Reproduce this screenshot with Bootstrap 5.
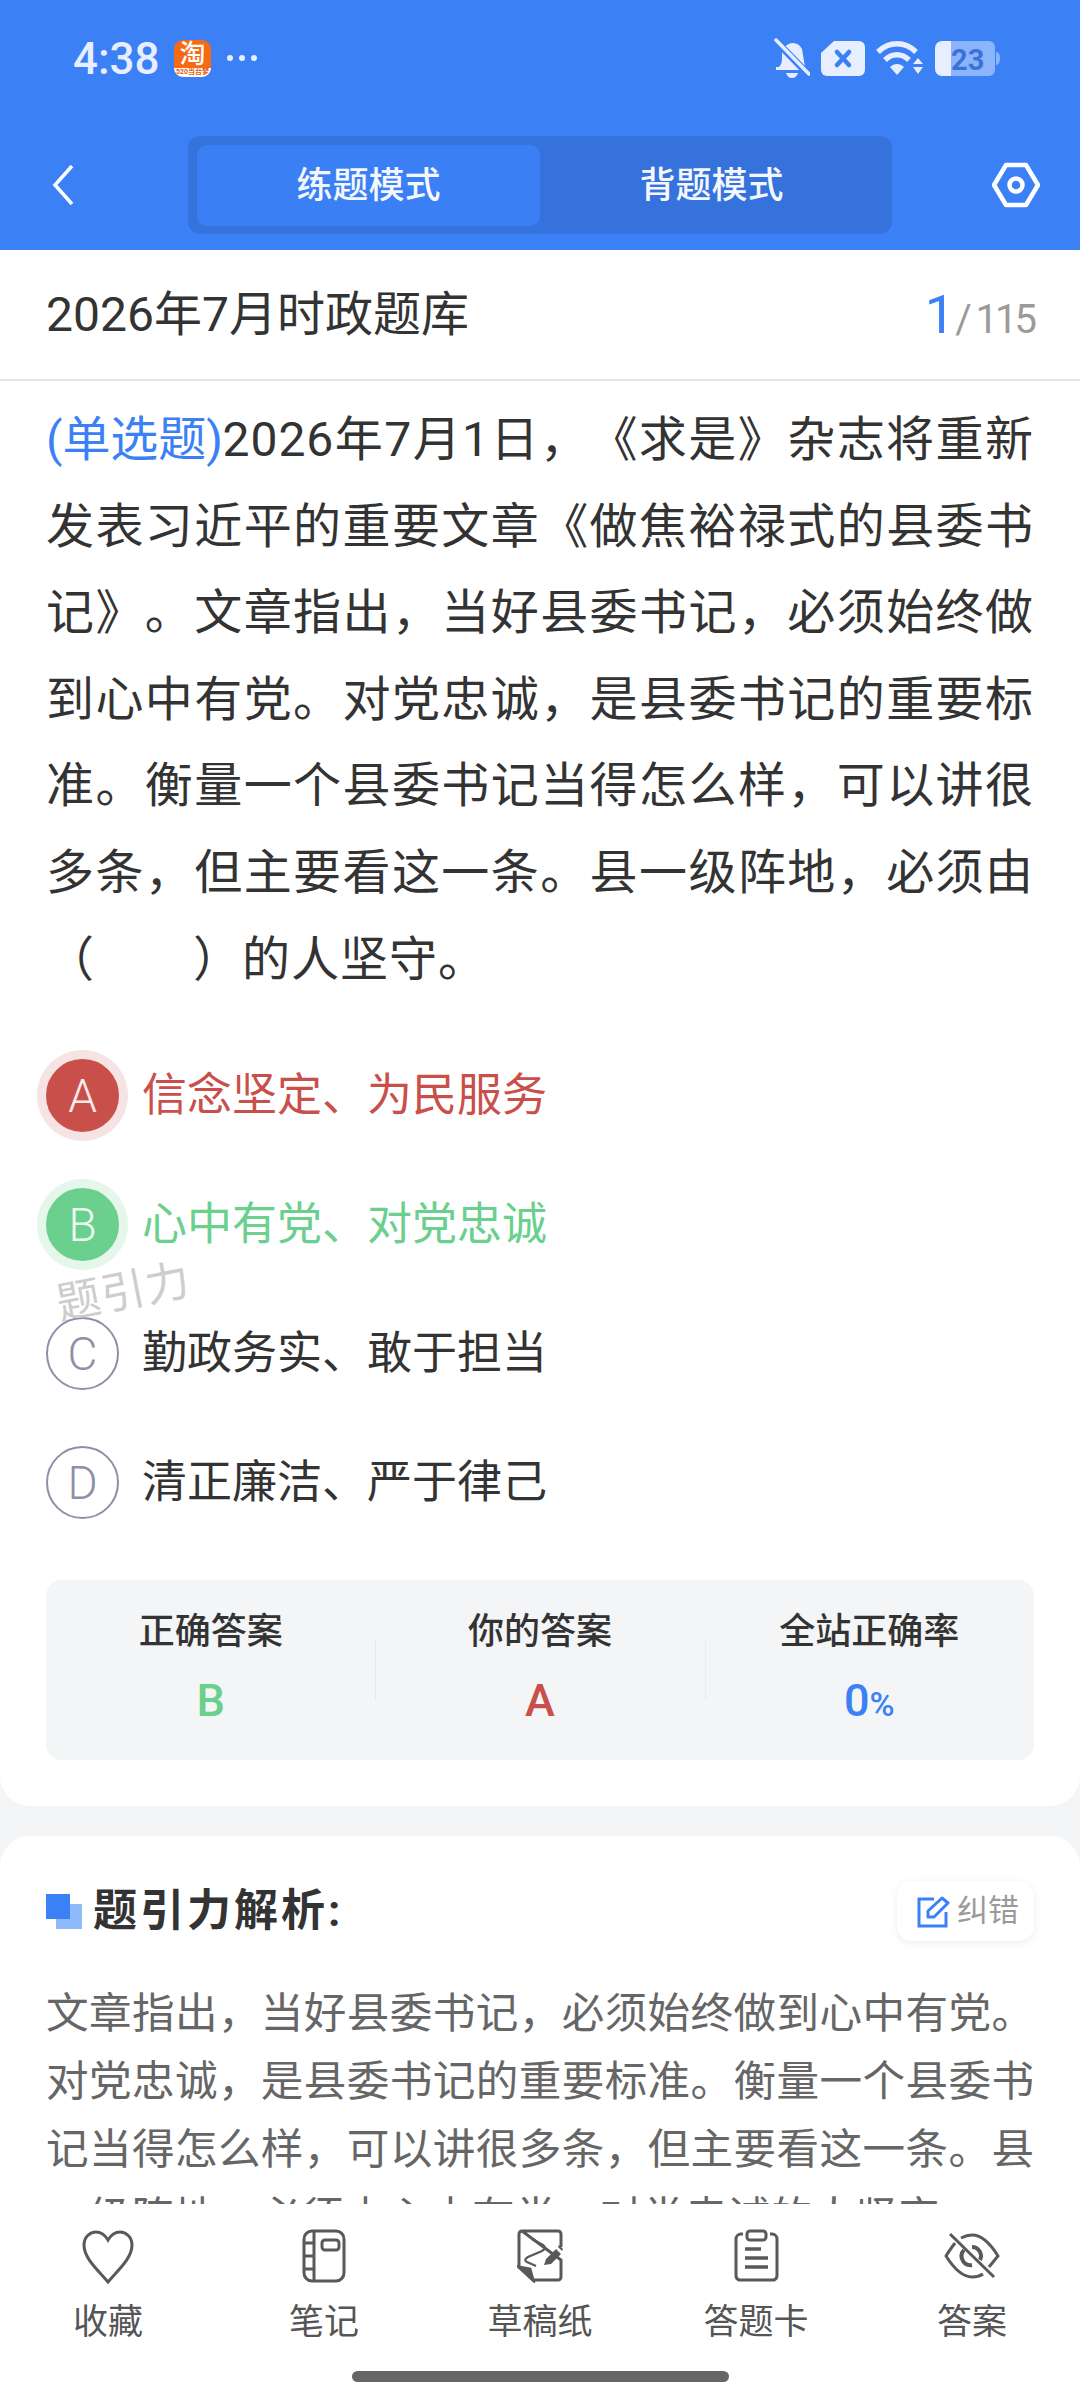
<!DOCTYPE html>
<html lang="zh-CN">
<head>
    <meta charset="UTF-8">
    <meta name="viewport" content="width=device-width, initial-scale=1.0">
    <title>练题模式</title>
    <link href="https://cdn.jsdelivr.net/npm/bootstrap@5.3.0/dist/css/bootstrap.min.css" rel="stylesheet">
    <style>
        html, body { height: 2400px; overflow: hidden; }
        body {
            background: #f4f5f7;
            color: #333;
            font-family: Roboto, "Noto Sans CJK SC", sans-serif;
            text-spacing-trim: space-all;
        }
        .screen { width: 1080px; height: 2400px; }
        .top-head { background: #3c80f6; height: 250px; flex: none; }
        .status-row { height: 116px; padding: 0 80px 0 73px; color: #e6eeff; }
        .clock { font-size: 44px; font-weight: 500; line-height: 1; width: 87px; margin-top: 1px; }
        .tb-icon {
            width: 37px; height: 37px; margin-left: 14px; border-radius: 9px; overflow: hidden;
            background: #f56a12; color: #fff; font-size: 26px; line-height: 28px; text-align: center; font-weight: 500;
        }
        .tb-strip { display: block; background: #fff; color: #e8590c; font-size: 7px; line-height: 9px; font-weight: 700; }
        .more-dots { margin-left: 16px; gap: 6px; }
        .more-dots i { width: 6px; height: 6px; border-radius: 50%; background: #e6eeff; display: block; }
        .nav-row { height: 134px; padding: 20px 40px 16px 52px; }
        .mode-tabs { width: 704px; height: 98px; margin-left: 114px; padding: 9px; background: #3572dc; border-radius: 12px; }
        .mode-tab { width: 343px; height: 81px; border-radius: 10px; color: #fff; font-size: 36px; font-weight: 500; opacity: .95; }
        .mode-tab.on { background: #3c80f6; }
        .title-row { height: 131px; padding: 0 46px; margin: 0 -46px; border-bottom: 2px solid #e6e6e6; }
        .title-text { font-size: 48px; line-height: 1; }
        .page-num { color: #9a9a9a; font-size: 40px; line-height: 1; letter-spacing: -3px; }
        .page-num b { color: #3c80f6; font-size: 54px; font-weight: 400; margin-right: 3px; }
        .panel-a { background: #fff; border-radius: 0 0 30px 30px; padding: 0 46px 46px; position: relative; flex: none; }
        .q-text { font-size: 48px; line-height: 86.6px; text-align: justify; letter-spacing: 1px; margin: 16px 0 28px; }
        .q-tag { color: #3c80f6; letter-spacing: -.5px; }
        .opt-row { height: 129px; font-size: 45px; }
        .opt-dot {
            width: 73px; height: 73px; margin-right: 23px; flex: none; border-radius: 50%;
            font-size: 46px; font-weight: 300; line-height: 1;
            border: 2px solid #8e90a6; color: #8e90a6;
        }
        .opt-wrong { color: #c9504a; }
        .opt-wrong .opt-dot { background: #c9504a; border-color: #c9504a; color: #fbeaea; box-shadow: 0 0 0 9px #f6e3e3; }
        .opt-right { color: #6bcf8e; }
        .opt-right .opt-dot { background: #6bcf8e; border-color: #6bcf8e; color: #eafbf0; box-shadow: 0 0 0 9px #e4f7ea; }
        .opt-plain { color: #333; }
        .water-mark {
            position: absolute; left: 56px; top: 1020px; color: #cdcdcd; font-size: 44px; line-height: 1;
            letter-spacing: 1px; transform: rotate(-11deg); white-space: nowrap;
        }
        .stat-box { height: 180px; margin-top: 33px; background: #f4f5f7; border-radius: 16px; padding-top: 27px; }
        .stat-col { width: 331px; text-align: center; position: relative; }
        .stat-col + .stat-col::before {
            content: ""; position: absolute; left: 0; top: 33px; height: 60px; width: 1px; background: #e9eaed;
        }
        .stat-name { font-size: 36px; line-height: 50px; font-weight: 500; color: #333; }
        .stat-val { font-size: 45px; line-height: 60px; margin-top: 14px; font-weight: 500; }
        .stat-val small { font-size: 34px; }
        .panel-b { background: #fff; border-radius: 30px 30px 0 0; margin-top: 30px; padding: 45px 46px 0; flex: 1 1 0; min-height: 0; overflow: hidden; }
        .sq-mark { width: 36px; height: 35px; position: relative; margin-right: 11px; flex: none; }
        .sq-mark::before { content: ""; position: absolute; left: 10px; top: 10px; width: 26px; height: 25px; background: #8fbafa; }
        .sq-mark::after { content: ""; position: absolute; left: 0; top: 0; width: 24px; height: 25px; background: #3c80f6; }
        .parse-title { font-size: 44px; font-weight: 700; letter-spacing: 3px; line-height: 1; }
        .fix-btn {
            width: 137px; height: 60px; padding-left: 5px; border-radius: 15px; background: #fff;
            box-shadow: 0 2px 8px rgba(0,0,0,.08); color: #9a9a9a; font-size: 31px; gap: 7px;
        }
        .parse-text { font-size: 42.6px; line-height: 68px; color: #666; margin-top: 38px; text-align: justify; }
        .bottom-tabs { height: 196px; flex: none; background: #fff; position: relative; }
        .tab-item { width: 216px; padding-top: 25px; color: #555; font-size: 35px; line-height: 1; text-align: center; }
        .tab-ico { height: 56px; margin-bottom: 20px; }
        .tab-ico svg { fill: none; stroke: #595959; stroke-width: 3; display: block; margin: 0 auto; }
        .home-bar { position: absolute; left: 352px; top: 167px; width: 377px; height: 11px; border-radius: 6px; background: #666; }
    </style>
</head>
<body>
<div class="screen d-flex flex-column">
    <header class="top-head">
        <div class="status-row d-flex align-items-center">
            <span class="clock">4:38</span>
            <span class="tb-icon">淘<span class="tb-strip">520当台梦</span></span>
            <span class="more-dots d-flex"><i></i><i></i><i></i></span>
            <span class="ms-auto d-flex align-items-center" style="gap:11px">
                <!-- bell muted -->
                <svg width="36" height="40" viewBox="0 0 36 40">
                    <path d="M5 29c3-3 3-6 3-11 0-8 5-13 11-13 4 0 7 2 9 6l3 18z" fill="#e6eeff"/>
                    <path d="M2 29h30v3H2z" fill="#e6eeff"/>
                    <path d="M12 35h12c-1 3-3 5-6 5s-5-2-6-5z" fill="#e6eeff"/>
                    <path d="M1 2l34 35" stroke="#3c80f6" stroke-width="7"/>
                    <path d="M2 2l33 34" stroke="#e6eeff" stroke-width="3.5" stroke-linecap="round"/>
                </svg>
                <!-- sim -->
                <svg width="44" height="35" viewBox="0 0 44 35">
                    <path d="M13 0h25a6 6 0 0 1 6 6v23a6 6 0 0 1-6 6H6a6 6 0 0 1-6-6V12z" fill="#e6eeff"/>
                    <path d="M16 11l12 13M28 11L16 24" stroke="#3c80f6" stroke-width="4.5" stroke-linecap="round"/>
                </svg>
                <!-- wifi -->
                <svg width="48" height="35" viewBox="0 0 48 35">
                    <path d="M2 11C13 0 29 0 40 11" fill="none" stroke="#e6eeff" stroke-width="5.5"/>
                    <path d="M9 19c7-7 17-7 24 0" fill="none" stroke="#e6eeff" stroke-width="5.5"/>
                    <path d="M14 26c4-4 10-4 14 0l-7 8z" fill="#e6eeff"/>
                    <path d="M42 17l5 6H37zM37 26h10l-5 7z" fill="#e6eeff"/>
                </svg>
                <!-- battery -->
                <span class="d-block">
                <svg width="65" height="35" viewBox="0 0 65 35">
                    <path d="M16 0h38a6 6 0 0 1 6 6v23a6 6 0 0 1-6 6H16z" fill="#8cb4fb"/>
                    <path d="M61 11c3 0 4 3 4 6s-1 7-4 7z" fill="#8cb4fb"/>
                    <path d="M7 0h9v35H7a7 7 0 0 1-7-7V7a7 7 0 0 1 7-7z" fill="#e6eeff"/>
                    <text x="16" y="29" font-family="Roboto" font-weight="700" font-size="29" fill="#3a72d8">23</text>
                </svg>
                </span>
            </span>
        </div>
        <div class="nav-row d-flex align-items-center">
            <svg width="22" height="42" viewBox="0 0 22 42"><path d="M20 2L3 21l17 19" fill="none" stroke="#fff" stroke-width="3.5"/></svg>
            <div class="mode-tabs d-flex">
                <div class="mode-tab on d-flex align-items-center justify-content-center">练题模式</div>
                <div class="mode-tab d-flex align-items-center justify-content-center">背题模式</div>
            </div>
            <svg class="ms-auto" width="48" height="46" viewBox="0 0 48 46"><path d="M14 3h20l12 20-12 20H14L2 23z" fill="none" stroke="#fff" stroke-width="4.5" stroke-linejoin="round"/><circle cx="24" cy="23" r="6.5" fill="none" stroke="#fff" stroke-width="4.5"/></svg>
        </div>
    </header>

    <div class="panel-a">
        <div class="title-row d-flex align-items-center justify-content-between">
            <span class="title-text">2026年7月时政题库</span>
            <span class="page-num"><b>1</b>/ 115</span>
        </div>
        <p class="q-text"><span class="q-tag">(单选题)</span>2026年7月1日，《求是》杂志将重新发表习近平的重要文章《做焦裕禄式的县委书记》。文章指出，当好县委书记，必须始终做到心中有党。对党忠诚，是县委书记的重要标准。衡量一个县委书记当得怎么样，可以讲很多条，但主要看这一条。县一级阵地，必须由（　　）的人坚守。</p>

        <div class="opt-row opt-wrong d-flex align-items-center"><span class="opt-dot d-flex align-items-center justify-content-center">A</span>信念坚定、为民服务</div>
        <div class="opt-row opt-right d-flex align-items-center"><span class="opt-dot d-flex align-items-center justify-content-center">B</span>心中有党、对党忠诚</div>
        <div class="opt-row opt-plain d-flex align-items-center"><span class="opt-dot d-flex align-items-center justify-content-center">C</span>勤政务实、敢于担当</div>
        <div class="opt-row opt-plain d-flex align-items-center"><span class="opt-dot d-flex align-items-center justify-content-center">D</span>清正廉洁、严于律己</div>
        <div class="water-mark">题引力</div>

        <div class="stat-box d-flex">
            <div class="stat-col"><div class="stat-name">正确答案</div><div class="stat-val" style="color:#6bcf8e">B</div></div>
            <div class="stat-col"><div class="stat-name">你的答案</div><div class="stat-val" style="color:#c9504a">A</div></div>
            <div class="stat-col"><div class="stat-name">全站正确率</div><div class="stat-val" style="color:#3c80f6">0<small>%</small></div></div>
        </div>
    </div>

    <div class="panel-b">
        <div class="d-flex align-items-center">
            <span class="sq-mark"></span>
            <span class="parse-title">题引力解析:</span>
            <span class="fix-btn ms-auto d-flex align-items-center justify-content-center">
                <svg width="33" height="33" viewBox="0 0 33 33"><path d="M17 4H2v27h27V17" fill="none" stroke="#3c80f6" stroke-width="3"/><path d="M11 22v-6L25 3l6 5-14 14z" fill="none" stroke="#3c80f6" stroke-width="3" stroke-linejoin="round"/></svg>
                纠错
            </span>
        </div>
        <p class="parse-text">文章指出，当好县委书记，必须始终做到心中有党。对党忠诚，是县委书记的重要标准。衡量一个县委书记当得怎么样，可以讲很多条，但主要看这一条。县一级阵地，必须由心中有党、对党忠诚的人坚守。</p>
    </div>

    <nav class="bottom-tabs d-flex">
        <div class="tab-item">
            <div class="tab-ico"><svg width="54" height="56" viewBox="0 0 54 56"><path d="M27 53C16 40 3 29 3 16 3 8 9 3 15 3c5 0 9 3 12 8 3-5 7-8 12-8 6 0 12 5 12 13 0 13-13 24-24 37z"/></svg></div>
            收藏
        </div>
        <div class="tab-item">
            <div class="tab-ico"><svg width="44" height="54" viewBox="0 0 44 54"><rect x="2" y="2" width="40" height="50" rx="8"/><path d="M12 2v50M2 14h10M2 27h10M2 40h10"/><rect x="20" y="11" width="17" height="10" rx="3"/></svg></div>
            笔记
        </div>
        <div class="tab-item">
            <div class="tab-ico"><svg width="46" height="54" viewBox="0 0 46 54"><path d="M5 2h36a3 3 0 0 1 3 3v13M44 31v17a3 3 0 0 1-3 3H16L2 38V5a3 3 0 0 1 3-3z"/><path d="M2 38l11 2 3 11z" fill="#595959"/><path d="M15 10l11 6q4 3-1 6l-14 6q-5 3-1 5l9 4" stroke-width="2.2"/><path d="M27 36l2-6 10-10 5 5-10 10zM41 18l1-2 4 4-1 2z" fill="#595959" stroke="none"/></svg></div>
            草稿纸
        </div>
        <div class="tab-item">
            <div class="tab-ico"><svg width="45" height="54" viewBox="0 0 45 54"><path d="M9 5H7a5 5 0 0 0-5 5v37a5 5 0 0 0 3 4h35a5 5 0 0 0 3-4V10a5 5 0 0 0-5-5h-2"/><rect x="13" y="2" width="19" height="9" rx="3"/><path d="M11 20h16M11 29h23M11 38h23" stroke-width="3.5"/></svg></div>
            答题卡
        </div>
        <div class="tab-item">
            <div class="tab-ico"><svg width="58" height="54" viewBox="0 0 58 54"><path d="M18 9c4-2 7-3 11-3 9 0 18 8 26 21l-9 11"/><path d="M12 14c-3 4-6 8-9 13 7 11 16 21 26 21 4 0 8-1 11-3"/><path d="M21 21a9 9 0 0 0 8 15M37 31a9 9 0 0 0-8-13" stroke-width="4"/><path d="M7 5l44 43"/></svg></div>
            答案
        </div>
        <div class="home-bar"></div>
    </nav>
</div>
<script src="https://cdn.jsdelivr.net/npm/bootstrap@5.3.0/dist/js/bootstrap.bundle.min.js"></script>
</body>
</html>
